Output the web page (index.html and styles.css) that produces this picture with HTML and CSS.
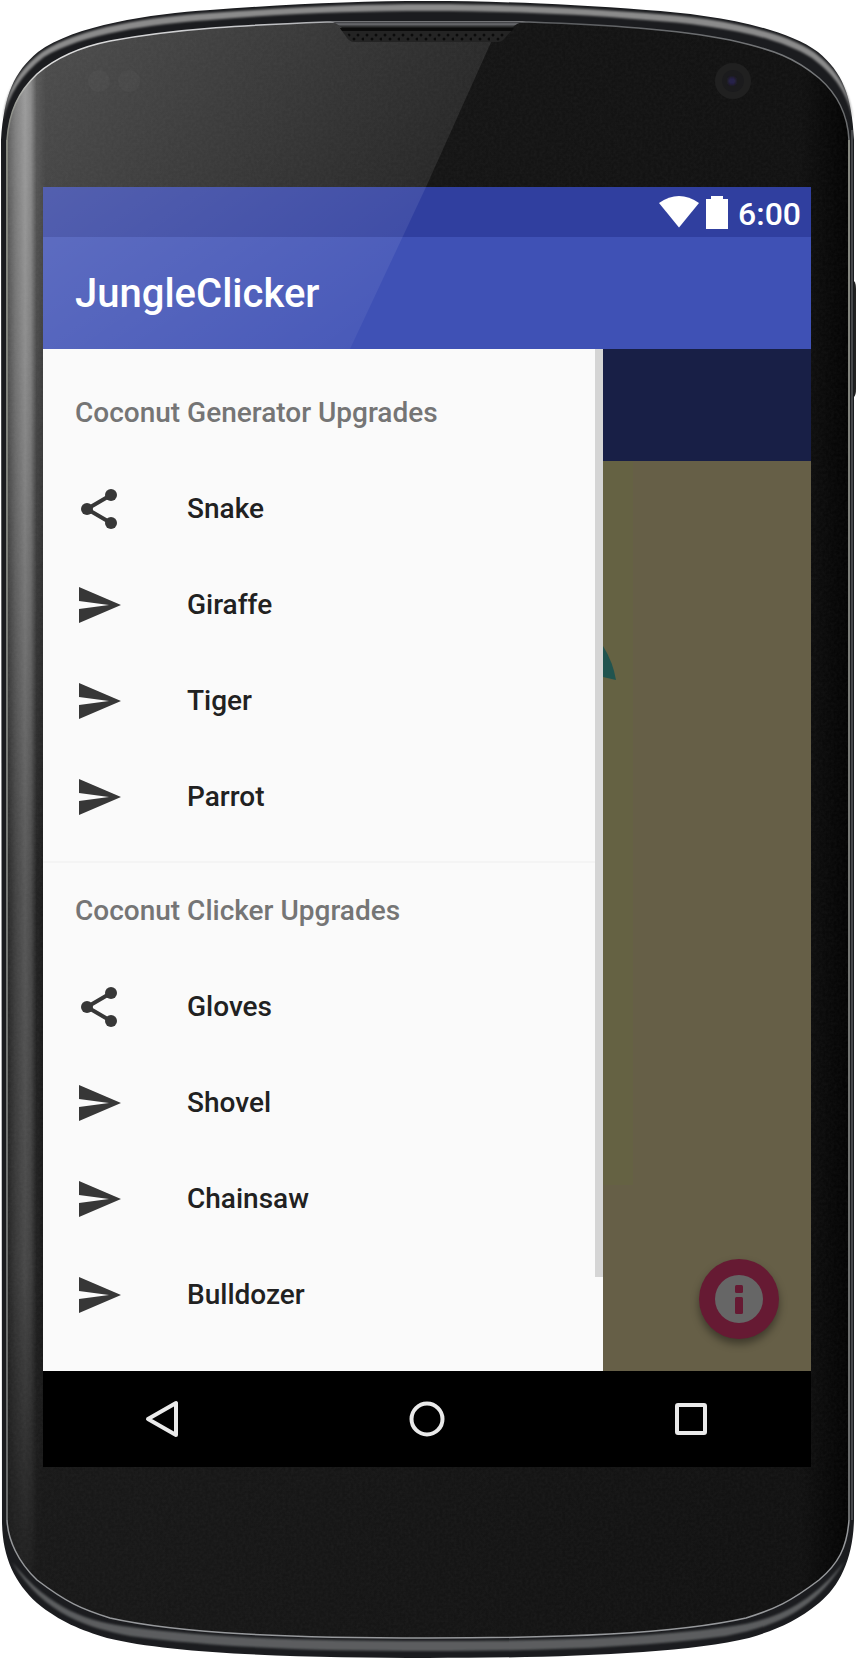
FILE: index.html
```html
<!DOCTYPE html>
<html lang="en">
<head>
<meta charset="utf-8">
<meta name="viewport" content="width=device-width, initial-scale=1">
<title>JungleClicker</title>
<link rel="stylesheet" href="styles.css">
</head>
<body>
<svg class="symbols" aria-hidden="true">
  <symbol id="share" viewBox="0 0 24 24"><path d="M18 5L6 12l12 7" fill="none" stroke="currentColor" stroke-width="2"/><circle cx="18" cy="5" r="3"/><circle cx="6" cy="12" r="3"/><circle cx="18" cy="19" r="3"/></symbol>
  <symbol id="send" viewBox="0 0 24 24"><path d="M2 3v7l15 2-15 2v7l21-9z"/></symbol>
</svg>
<div class="phone">
  <svg class="frame" viewBox="0 0 856 1659" preserveAspectRatio="none" aria-hidden="true">
    <defs>
      <linearGradient id="edge" gradientUnits="userSpaceOnUse" x1="8" y1="0" x2="46" y2="0">
        <stop offset="0" stop-color="#fff" stop-opacity=".12"/><stop offset=".2" stop-color="#fff" stop-opacity=".3"/><stop offset=".45" stop-color="#fff" stop-opacity=".45"/><stop offset=".6" stop-color="#fff" stop-opacity=".36"/><stop offset=".75" stop-color="#fff" stop-opacity=".08"/><stop offset="1" stop-color="#fff" stop-opacity="0"/>
      </linearGradient>
      <linearGradient id="edgeFade" x1="0" y1="0" x2="0" y2="1">
        <stop offset="0" stop-color="#fff"/><stop offset=".2" stop-color="#eee"/><stop offset=".5" stop-color="#a5a5a5"/><stop offset=".8" stop-color="#777"/><stop offset="1" stop-color="#111"/>
      </linearGradient>
      <mask id="edgeMask" maskUnits="userSpaceOnUse" x="0" y="40" width="60" height="1560"><rect x="0" y="60" width="60" height="1510" fill="url(#edgeFade)"/></mask>
      <linearGradient id="rightShade" gradientUnits="userSpaceOnUse" x1="800" y1="0" x2="848" y2="0">
        <stop offset="0" stop-color="#000" stop-opacity="0"/><stop offset="1" stop-color="#000" stop-opacity=".8"/>
      </linearGradient>
      <linearGradient id="body" x1="0" y1="0" x2="1" y2="0"><stop offset="0" stop-color="#191919"/><stop offset="1" stop-color="#111"/></linearGradient>
      <linearGradient id="glare" gradientUnits="userSpaceOnUse" x1="60" y1="60" x2="400" y2="300">
        <stop offset="0" stop-color="#fff" stop-opacity=".22"/><stop offset="1" stop-color="#fff" stop-opacity=".07"/>
      </linearGradient>
      <linearGradient id="leftGlare" gradientUnits="userSpaceOnUse" x1="0" y1="187" x2="0" y2="900">
        <stop offset="0" stop-color="#fff" stop-opacity=".2"/><stop offset="1" stop-color="#fff" stop-opacity="0"/>
      </linearGradient>
      <linearGradient id="lip" x1="0" y1="0" x2="0" y2="1">
        <stop offset="0" stop-color="#a5a5a8"/><stop offset=".15" stop-color="#3a3b3e"/><stop offset=".45" stop-color="#6d6e72"/><stop offset=".7" stop-color="#3d3e40"/><stop offset="1" stop-color="#111"/>
      </linearGradient>
      <linearGradient id="topLine" x1="0" y1="0" x2="1" y2="0">
        <stop offset="0" stop-color="#85877f"/><stop offset=".04" stop-color="#e0e0e0"/><stop offset=".3" stop-color="#c4c5c8"/><stop offset=".65" stop-color="#5b5d60"/><stop offset=".95" stop-color="#77797b"/><stop offset="1" stop-color="#6a6c6e"/>
      </linearGradient>
      <linearGradient id="side" x1="0" y1="0" x2="0" y2="1"><stop offset="0" stop-color="#85877f"/><stop offset="1" stop-color="#686a6a"/></linearGradient>
      <pattern id="holes" width="18" height="9" patternUnits="userSpaceOnUse" x="346" y="32"><circle cx="3" cy="3" r="1.5" fill="#0b0b0b"/><circle cx="12" cy="3" r="1.5" fill="#0b0b0b"/><circle cx="8" cy="7" r="1.5" fill="#0b0b0b"/><circle cx="17" cy="7" r="1.5" fill="#0b0b0b"/></pattern>
      <filter id="soft"><feGaussianBlur stdDeviation="1"/></filter>
      <filter id="grain" x="0" y="0" width="100%" height="100%"><feTurbulence type="fractalNoise" baseFrequency=".35" numOctaves="2" seed="4"/><feColorMatrix values="0 0 0 0 1  0 0 0 0 1  0 0 0 0 1  .05 0 0 0 -.015"/></filter>
      <clipPath id="glass"><path d="M7 140C9 112 18 92 37 74C60 54 90 45 110 41C180 28 250 25 327 22H529C606 25 676 29 730 40C775 50 795 58 819 78C842 98 848 120 849 140V1520C847 1548 838 1564 819 1580C790 1602 775 1609 746 1618C675 1634 560 1638 428 1638C296 1638 181 1634 110 1618C81 1609 66 1602 37 1580C18 1562 8 1540 7 1520Z"/></clipPath>
    </defs>
    <path d="M852 281h2q2 2 2 8v100q0 6-2 8h-2z" fill="#222"/>
    <path d="M1 140C4 95 14 72 38 52C75 25 150 14 210 10C290 4 360 1 428 1C496 1 566 4 646 10C706 14 781 25 818 52C842 72 852 95 854 140V1520C853 1558 840 1586 819 1603C796 1622 775 1630 749 1638C680 1655 540 1658 428 1658C316 1658 176 1655 107 1638C81 1630 60 1622 37 1603C14 1582 2 1556 2 1520Z" fill="#1b1c1f"/>
    <path d="M3 120C6 92 18 70 42 52C80 27 150 17 210 13C290 7 360 4 428 4C496 4 566 7 646 13C706 17 776 27 814 52C838 70 850 92 853 120C848 95 836 76 812 58C774 34 706 24 646 20C566 13 496 11 428 11C360 11 290 13 210 20C150 24 82 34 44 57C22 74 8 95 3 120Z" fill="#8b8b8b" filter="url(#soft)"/>
    <path d="M12 1562C50 1610 90 1622 130 1627C220 1639 320 1641 428 1641C536 1641 636 1639 726 1627C766 1622 806 1610 844 1562C812 1616 766 1628 726 1636C636 1648 536 1651 428 1651C320 1651 220 1648 130 1636C90 1628 44 1616 12 1562Z" fill="#5b5d5f" filter="url(#soft)"/>
    <path d="M852 130V1520" stroke="#45474a" stroke-width="2"/>
    <g clip-path="url(#glass)">
      <rect width="856" height="1659" fill="url(#body)"/>
      <rect x="800" width="56" height="1659" fill="url(#rightShade)"/>
      <path d="M0 0H510L426 187H0Z" fill="url(#glare)"/>
      <rect y="187" width="46" height="713" fill="url(#leftGlare)"/>
      <rect x="6" y="40" width="42" height="1560" fill="url(#edge)" mask="url(#edgeMask)"/>
      <rect width="856" height="1659" filter="url(#grain)"/>
    </g>
    <path d="M7 140C9 112 18 92 37 74C60 54 90 45 110 41C180 28 250 25 327 22H529C606 25 676 29 730 40C775 50 795 58 819 78C842 98 848 120 849 140" fill="none" stroke="url(#topLine)" stroke-width="1.5"/>
    <path d="M6 140H8V1520H6ZM848 140H850V1520H848Z" fill="url(#side)"/>
    <path d="M849 1520C847 1548 838 1564 819 1580C790 1602 775 1609 746 1618C675 1634 560 1638 428 1638C296 1638 181 1634 110 1618C81 1609 66 1602 37 1580C18 1562 8 1540 7 1520" fill="none" stroke="#97999c" stroke-width="1.500"/>
    <path d="M330 21H526Q516 23 512 28H342Q337 23 330 21Z" fill="url(#lip)"/>
    <path d="M340 28H514L505 38Q502 42 498 42H354Q350 42 347 38Z" fill="#242424"/>
    <path d="M340 28H514L512 31H342Z" fill="#0b0b0b"/>
    <path d="M346 32H509L503 41H352Z" fill="url(#holes)"/>
    <circle cx="99" cy="81" r="11" fill="#fff" opacity=".025"/>
    <circle cx="129" cy="81" r="11" fill="#fff" opacity=".025"/>
    <circle cx="733" cy="81" r="18" fill="#202020"/>
    <circle cx="733" cy="81" r="11" fill="#1b1b1d"/>
    <circle cx="732" cy="81" r="4" fill="#28244a" filter="url(#soft)"/>
  </svg>

  <div class="screen">
    <header class="top">
      <div class="status">
        <svg class="wifi" viewBox="0 0 40 32" aria-label="Wi-Fi" role="img"><path d="M0 7Q20-7 40 7L20 31.500z" fill="#fff"/></svg>
        <svg class="battery" viewBox="0 0 22 33" aria-label="Battery" role="img"><path d="M5 0h12v3h5v30H0V3h5z" fill="#fff"/></svg>
        <time class="clock">6:00</time>
      </div>
      <div class="appbar"><h1 class="title">JungleClicker</h1></div>
      <svg class="shine" viewBox="0 0 768 162" preserveAspectRatio="none" aria-hidden="true">
        <defs><linearGradient id="shineFill" gradientUnits="userSpaceOnUse" x1="0" y1="0" x2="180" y2="260"><stop offset="0" stop-color="#fff" stop-opacity=".17"/><stop offset="1" stop-color="#fff" stop-opacity=".05"/></linearGradient></defs>
        <path d="M0 0H383L307 162H0Z" fill="url(#shineFill)"/>
      </svg>
    </header>

    <div class="content">
      <nav class="drawer" aria-label="Upgrades">
        <h2 class="group">Coconut Generator Upgrades</h2>
        <ul class="items">
          <li><a class="item" href="#snake"><svg class="icon"><use href="#share"/></svg>Snake</a></li>
          <li><a class="item" href="#giraffe"><svg class="icon"><use href="#send"/></svg>Giraffe</a></li>
          <li><a class="item" href="#tiger"><svg class="icon"><use href="#send"/></svg>Tiger</a></li>
          <li><a class="item" href="#parrot"><svg class="icon"><use href="#send"/></svg>Parrot</a></li>
        </ul>
        <h2 class="group divided">Coconut Clicker Upgrades</h2>
        <ul class="items">
          <li><a class="item" href="#gloves"><svg class="icon"><use href="#share"/></svg>Gloves</a></li>
          <li><a class="item" href="#shovel"><svg class="icon"><use href="#send"/></svg>Shovel</a></li>
          <li><a class="item" href="#chainsaw"><svg class="icon"><use href="#send"/></svg>Chainsaw</a></li>
          <li><a class="item" href="#bulldozer"><svg class="icon"><use href="#send"/></svg>Bulldozer</a></li>
        </ul>
        <span class="scrollbar"></span>
      </nav>
      <main class="game">
        <div class="toolbar"></div>
        <div class="field">
          <svg class="leaf" viewBox="0 0 30 724" aria-hidden="true"><rect width="30" height="724" fill="#656243"/><path d="M0 185Q10 201 13 219L0 216Z" fill="#21544f"/></svg>
          <button class="fab" type="button" aria-label="Info">
            <svg class="info" viewBox="0 0 48 48"><circle cx="24" cy="24" r="24" fill="#666"/><rect x="20" y="10" width="8" height="8" rx="1.500" fill="#661a33"/><rect x="20" y="22" width="8" height="17" rx="1.500" fill="#661a33"/></svg>
          </button>
        </div>
      </main>
    </div>

    <div class="navbar">
      <button class="key" type="button" aria-label="Back"><svg class="glyph" viewBox="0 0 48 48"><path d="M37 8v32L9 24z"/></svg></button>
      <button class="key" type="button" aria-label="Home"><svg class="glyph" viewBox="0 0 48 48"><circle cx="24" cy="24" r="15.500"/></svg></button>
      <button class="key" type="button" aria-label="Recent apps"><svg class="glyph" viewBox="0 0 48 48"><rect x="10" y="10" width="28" height="28" rx="1"/></svg></button>
    </div>
  </div>
</div>
</body>
</html>
```
FILE: styles.css
```css
*, *::before, *::after { box-sizing: border-box; }
body { margin: 0; background: #fff; font-family: Roboto, "Liberation Sans", sans-serif; font-weight: 500; }
.symbols { position: absolute; width: 0; height: 0; }
.phone { position: relative; padding: 187px 45px 192px 43px; }
.frame { position: absolute; inset: 0; width: 100%; height: 100%; }
.screen { position: relative; display: flex; flex-direction: column; }

.top { position: relative; color: #fff; }
.status { display: flex; align-items: center; justify-content: flex-end; height: 50px; padding: 0 10px; background: #303f9f; }
.wifi { width: 40px; height: 32px; margin-right: 7px; }
.battery { width: 22px; height: 33px; margin-right: 10px; }
.clock { font-size: 32px; line-height: 48px; padding-top: 4px; }
.appbar { display: flex; align-items: center; height: 112px; padding: 2px 32px 0; background: #3f51b5; }
.title { margin: 0; font-size: 40px; line-height: 48px; font-weight: 500; }
.shine { position: absolute; inset: 0; width: 100%; height: 100%; pointer-events: none; }

.content { display: flex; }
.drawer { position: relative; flex: 0 1 560px; padding: 16px 0 28px; background: #fafafa; }
.group { margin: 0; padding: 0 32px; font-size: 28px; line-height: 96px; font-weight: 500; color: #757575; }
.divided { margin-top: 16px; border-top: 2px solid #f4f4f4; }
.items { margin: 0; padding: 0; list-style: none; }
.item { display: flex; align-items: center; gap: 64px; height: 96px; padding: 0 32px; font-size: 28px; line-height: 32px; color: #212121; text-decoration: none; }
.icon { flex: none; width: 48px; height: 48px; color: #373737; fill: currentColor; }
.scrollbar { position: absolute; top: 0; right: 0; width: 8px; height: 928px; background: #d5d5d5; }

.game { flex: 1 0 0; display: flex; flex-direction: column; }
.toolbar { height: 112px; background: #181f46; }
.field { position: relative; flex: 1; background: #665f47; }
.leaf { display: block; width: 30px; height: 724px; }
.fab { position: absolute; right: 32px; bottom: 32px; display: grid; place-items: center; width: 80px; height: 80px; padding: 0; border: 0; border-radius: 50%; background: #661a33; box-shadow: 0 5px 8px rgba(0, 0, 0, .4); }
.info { width: 48px; height: 48px; }

.navbar { display: flex; align-items: center; justify-content: space-between; height: 96px; padding: 0 80px; background: #000; }
.key { display: grid; place-items: center; width: 80px; height: 80px; padding: 0; border: 0; background: none; }
.glyph { width: 48px; height: 48px; fill: none; stroke: #eaeaea; stroke-width: 4; stroke-linejoin: round; }
```
